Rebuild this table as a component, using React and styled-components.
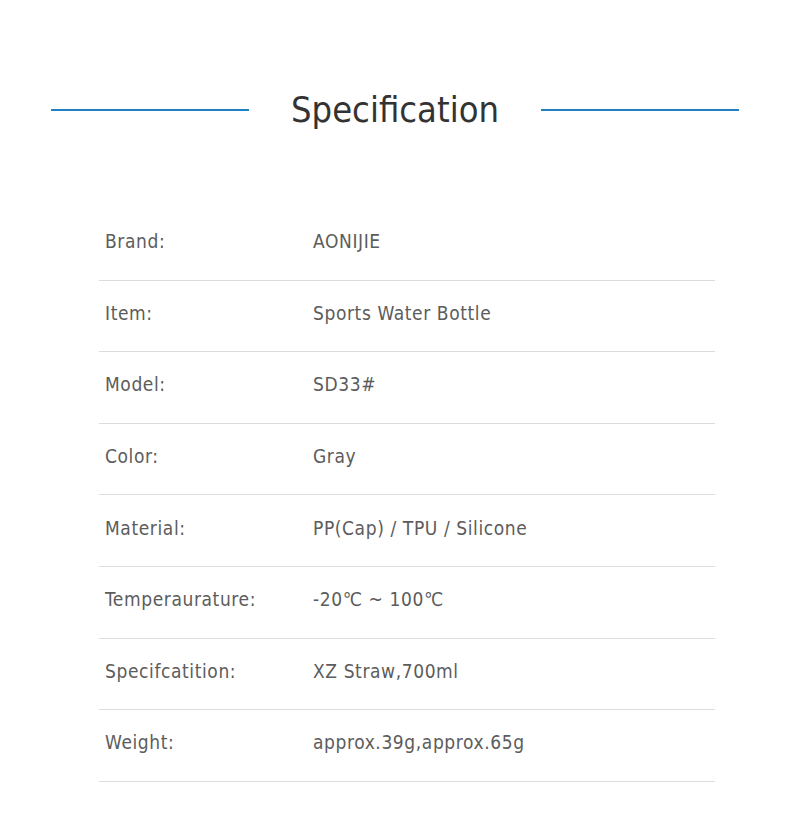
import React from "react";
import styled, { createGlobalStyle } from "styled-components";

const Global = createGlobalStyle`
  html, body { margin: 0; padding: 0; background: #fff; }
  body { font-family: "DejaVu Sans Condensed", "DejaVu Sans", sans-serif; }
`;

const Page = styled.div`
  width: 790px;
  min-height: 831px;
  background: #fff;
  display: flex;
  flex-direction: column;
`;

const Header = styled.header`
  display: flex;
  align-items: center;
  justify-content: center;
  padding-top: 86px;
  height: 48px;
  gap: 42px;
`;

const Rule = styled.span`
  display: block;
  width: 198px;
  height: 2px;
  background: #1f80c4;
`;

const Title = styled.h1`
  margin: 0;
  font-weight: normal;
  font-size: 36px;
  color: #333;
  line-height: 48px;
`;

const Table = styled.div`
  margin: 75px 0 0 99px;
  width: 616px;
  display: flex;
  flex-direction: column;
`;

const Row = styled.div`
  display: grid;
  grid-template-columns: 208px 1fr;
  align-items: center;
  height: 71.6px;
  padding: 0 0 6px 6px;
  box-sizing: border-box;
  border-bottom: 1px solid #dcdcdc;
  font-size: 19px;
  letter-spacing: 0.6px;
  color: #5c5c5c;
`;

const Cell = styled.span`
  white-space: nowrap;
`;

const specs = [
  ["Brand:", "AONIJIE"],
  ["Item:", "Sports Water Bottle"],
  ["Model:", "SD33#"],
  ["Color:", "Gray"],
  ["Material:", "PP(Cap) / TPU / Silicone"],
  ["Temperaurature:", "-20℃ ~ 100℃"],
  ["Specifcatition:", "XZ Straw,700ml"],
  ["Weight:", "approx.39g,approx.65g"],
];

export default function App() {
  return (
    <Page>
      <Global />
      <Header>
        <Rule />
        <Title>Specification</Title>
        <Rule />
      </Header>
      <Table>
        {specs.map(([k, v]) => (
          <Row key={k}>
            <Cell>{k}</Cell>
            <Cell>{v}</Cell>
          </Row>
        ))}
      </Table>
    </Page>
  );
}
